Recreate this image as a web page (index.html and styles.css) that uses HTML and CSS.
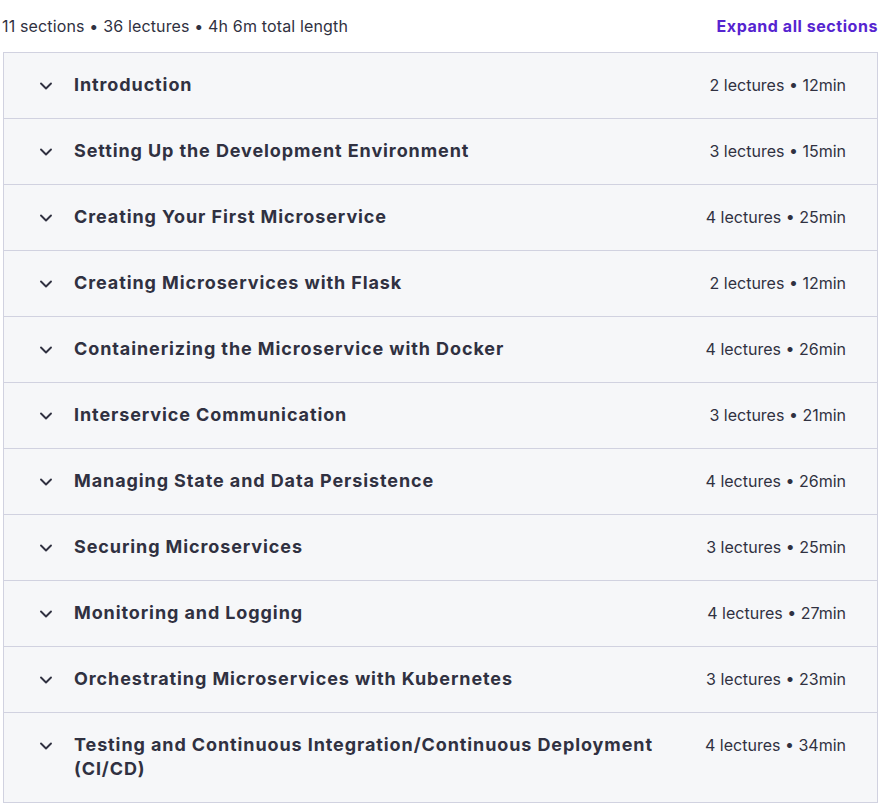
FILE: index.html
```html
<!DOCTYPE html>
<html lang="en">
<head>
  <meta charset="UTF-8" />
  <title>Course content</title>
  <link rel="stylesheet" href="styles.css">
</head>
<body>

  <div class="content-head">
    <span class="summary">11 sections • 36 lectures • 4h 6m total length</span>
    <button class="expand-all">Expand all sections</button>
  </div>

  <div class="sections">
    <div class="section">
      <svg class="chevron" viewBox="0 0 16 16"><path d="M3 6.5 8 11.5l5-5"/></svg>
      <span class="title">Introduction</span>
      <span class="meta">2 lectures • 12min</span>
    </div>
    <div class="section">
      <svg class="chevron" viewBox="0 0 16 16"><path d="M3 6.5 8 11.5l5-5"/></svg>
      <span class="title">Setting Up the Development Environment</span>
      <span class="meta">3 lectures • 15min</span>
    </div>
    <div class="section">
      <svg class="chevron" viewBox="0 0 16 16"><path d="M3 6.5 8 11.5l5-5"/></svg>
      <span class="title">Creating Your First Microservice</span>
      <span class="meta">4 lectures • 25min</span>
    </div>
    <div class="section">
      <svg class="chevron" viewBox="0 0 16 16"><path d="M3 6.5 8 11.5l5-5"/></svg>
      <span class="title">Creating Microservices with Flask</span>
      <span class="meta">2 lectures • 12min</span>
    </div>
    <div class="section">
      <svg class="chevron" viewBox="0 0 16 16"><path d="M3 6.5 8 11.5l5-5"/></svg>
      <span class="title">Containerizing the Microservice with Docker</span>
      <span class="meta">4 lectures • 26min</span>
    </div>
    <div class="section">
      <svg class="chevron" viewBox="0 0 16 16"><path d="M3 6.5 8 11.5l5-5"/></svg>
      <span class="title">Interservice Communication</span>
      <span class="meta">3 lectures • 21min</span>
    </div>
    <div class="section">
      <svg class="chevron" viewBox="0 0 16 16"><path d="M3 6.5 8 11.5l5-5"/></svg>
      <span class="title">Managing State and Data Persistence</span>
      <span class="meta">4 lectures • 26min</span>
    </div>
    <div class="section">
      <svg class="chevron" viewBox="0 0 16 16"><path d="M3 6.5 8 11.5l5-5"/></svg>
      <span class="title">Securing Microservices</span>
      <span class="meta">3 lectures • 25min</span>
    </div>
    <div class="section">
      <svg class="chevron" viewBox="0 0 16 16"><path d="M3 6.5 8 11.5l5-5"/></svg>
      <span class="title">Monitoring and Logging</span>
      <span class="meta">4 lectures • 27min</span>
    </div>
    <div class="section">
      <svg class="chevron" viewBox="0 0 16 16"><path d="M3 6.5 8 11.5l5-5"/></svg>
      <span class="title">Orchestrating Microservices with Kubernetes</span>
      <span class="meta">3 lectures • 23min</span>
    </div>
    <div class="section">
      <svg class="chevron" viewBox="0 0 16 16"><path d="M3 6.5 8 11.5l5-5"/></svg>
      <span class="title">Testing and Continuous Integration/Continuous Deployment (CI/CD)</span>
      <span class="meta">4 lectures • 34min</span>
    </div>
  </div>

</body>
</html>
```

FILE: styles.css
```css
body {
  margin: 0;
  padding: 0 2px 0 3px;
  font-family: Inter, "Noto Sans", sans-serif;
  color: #303141;
  background: #fff;
}

.content-head {
  display: flex;
  justify-content: space-between;
  align-items: center;
  height: 52px;
}

.summary {
  font-size: 16px;
  margin-left: -1px;
  letter-spacing: 0.15px;
  color: #303141;
}

.expand-all {
  background: none;
  border: none;
  padding: 0;
  font-family: inherit;
  font-size: 16px;
  font-weight: 700;
  letter-spacing: 0.55px;
  color: #5624d0;
  cursor: pointer;
}

.sections {
  border: 1px solid #d1d2e0;
  border-bottom: none;
}

.section {
  display: flex;
  align-items: flex-start;
  background: #f6f7f9;
  border-bottom: 1px solid #d1d2e0;
  padding: 20px 31px 21px 34px;
  line-height: 24px;
}

.chevron {
  width: 16px;
  height: 16px;
  flex: none;
  margin: 4px 20px 0 0;
  fill: none;
  stroke: #303141;
  stroke-width: 1.9;
  stroke-linecap: round;
  stroke-linejoin: round;
}

.title {
  flex: 1;
  font-size: 18px;
  font-weight: 700;
  letter-spacing: 0.9px;
  padding-right: 16px;
}

.meta {
  font-size: 16px;
  white-space: nowrap;
}
```
